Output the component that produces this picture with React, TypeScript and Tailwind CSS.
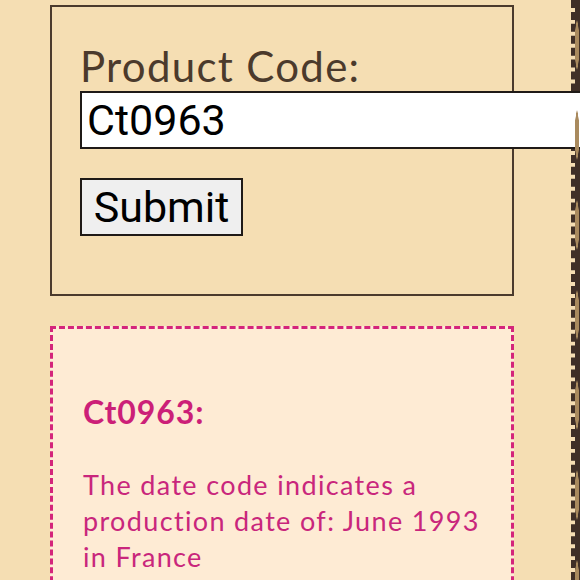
export default function App() {
  return (
    <div className="flex h-[580px] w-[580px] overflow-hidden bg-[#3f2f27]">
      {/* Main column */}
      <div className="w-[575px] shrink-0 border-r-[4px] border-dashed border-[#3f2f27] bg-[#f5deb3] pl-[50px] pt-[5px] font-['Lato',sans-serif]">
        <form className="flex h-[291px] w-[464px] flex-col items-start border-2 border-[#4b3a2c] pl-[28px] pt-[34px]">
          <label className="block text-[42px] leading-[50px] tracking-[1.3px] text-[#4b3a2c]">Product Code:</label>
          <input
            defaultValue="Ct0963"
            className="block h-[58px] w-[560px] border-2 border-[#1f1a17] bg-white px-[5px] font-['Roboto',sans-serif] text-[43px] text-black outline-none"
          />
          <button
            type="button"
            className="mt-[29px] block h-[58px] w-[163px] border-2 border-[#1f1a17] bg-[#efefef] font-['Roboto',sans-serif] text-[43px] leading-none text-black"
          >
            Submit
          </button>
        </form>

        <div className="mt-[30px] w-[464px] border-[3px] border-dashed border-[#d4257b] bg-[#feebd4] px-[30px] pt-[63px] pb-[40px] text-[#c9267c]">
          <h2 className="text-[32px] font-bold leading-[40px] tracking-[0.9px] text-[#cc1f78]">Ct0963:</h2>
          <p className="mt-[35px] text-[27px] leading-[36px] tracking-[1.35px]">
            The date code indicates a production date of: June 1993 in France
          </p>
        </div>
      </div>
      {/* Patterned edge */}
      <div className="flex-1 bg-[radial-gradient(ellipse_at_center,#a98a5e_0,#a98a5e_35%,transparent_40%)] bg-[length:8px_90px] bg-[position:-2px_0px]" />
    </div>
  );
}
